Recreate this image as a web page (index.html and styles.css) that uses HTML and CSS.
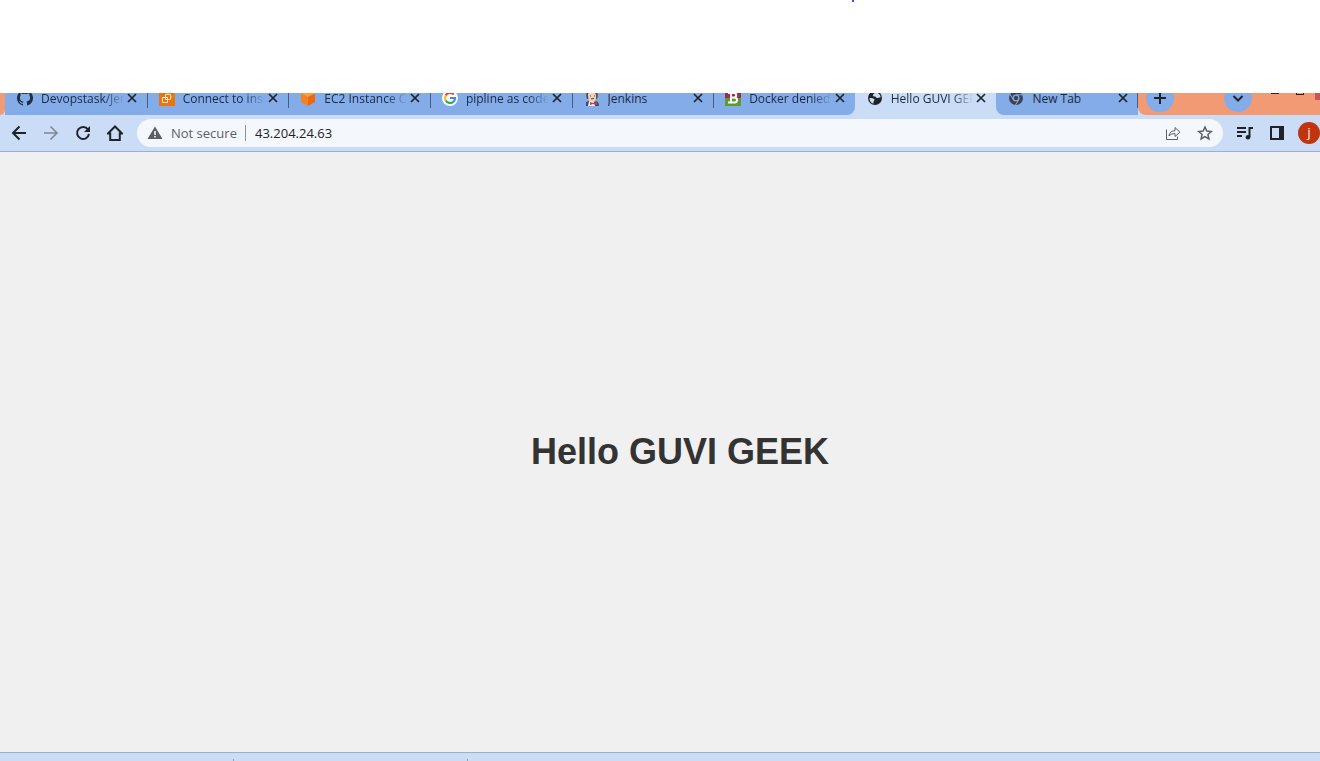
FILE: index.html
```html
<!DOCTYPE html>
<html lang="en">
<head>
<meta charset="utf-8">
<title>Hello GUVI GEEK</title>
<link rel="stylesheet" href="styles.css">
</head>
<body>
<div class="blank"><span class="speck"></span></div>
<header class="browser">
  <div class="strip">
    <div class="strip-edge"></div>
    <nav class="tabs" aria-label="Tabs">
      <div class="tab divided">
        <svg class="icon" viewBox="0 0 16 16"><path fill="#20303f" d="M8 0a8 8 0 0 0-2.5 15.6c.4.1.5-.2.5-.4v-1.500c-2.200.5-2.700-1-2.700-1-.4-.9-.9-1.200-.9-1.200-.7-.5.1-.5.1-.5.8.1 1.200.8 1.200.8.7 1.300 1.900.9 2.300.7.1-.5.3-.9.5-1.100-1.800-.2-3.600-.9-3.600-4 0-.9.3-1.600.8-2.100-.1-.2-.4-1 .1-2.100 0 0 .7-.2 2.200.8a7.500 7.500 0 0 1 4 0c1.500-1 2.200-.8 2.200-.8.4 1.100.2 1.900.1 2.100.5.6.8 1.300.8 2.100 0 3.100-1.900 3.700-3.700 3.900.3.3.6.8.6 1.500v2.400c0 .2.1.5.5.4A8 8 0 0 0 8 0Z"/></svg>
        <a class="title faded" href="#t1">Devopstask/Jen</a>
        <button class="close" aria-label="Close tab"><svg viewBox="0 0 16 16"><path d="m4 4 8 8m0-8-8 8"/></svg></button>
      </div>
      <div class="tab divided">
        <svg class="icon" viewBox="0 0 16 16"><path fill="#e8750e" d="M0 0h16v16H0z"/><g fill="none" stroke="#ffe6cf"><path d="M6.500 4.500h5v5h-5zM3.500 7.500h5v5h-5z"/><path stroke-width=".6" d="M9 2.500v2m4.500 2.500h-2"/></g></svg>
        <a class="title faded" href="#t2">Connect to inst</a>
        <button class="close" aria-label="Close tab"><svg viewBox="0 0 16 16"><path d="m4 4 8 8m0-8-8 8"/></svg></button>
      </div>
      <div class="tab divided">
        <svg class="icon" viewBox="0 0 16 16"><path fill="#ff9a3d" d="m8 0 7 3.500L8 7 1 3.500z"/><path fill="#f58220" d="M1 3.500 8 7v9l-7-4z"/><path fill="#e86a10" d="M15 3.500 8 7v9l7-4z"/></svg>
        <a class="title faded" href="#t3">EC2 Instance C</a>
        <button class="close" aria-label="Close tab"><svg viewBox="0 0 16 16"><path d="m4 4 8 8m0-8-8 8"/></svg></button>
      </div>
      <div class="tab divided">
        <svg class="icon" viewBox="0 0 16 16"><circle cx="8" cy="8" r="8" fill="#fff"/><g fill="none" stroke-width="2.200"><path stroke="#ea4335" d="M3.700 5.500A5 5 0 0 1 11.700 4.600"/><path stroke="#fbbc05" d="M3.700 5.500a5 5 0 0 0 0 5"/><path stroke="#34a853" d="M3.700 10.500a5 5 0 0 0 7.600 1.300"/><path stroke="#4285f4" d="M11.300 11.800A5 5 0 0 0 13 8H8"/></g></svg>
        <a class="title faded" href="#t4">pipline as code</a>
        <button class="close" aria-label="Close tab"><svg viewBox="0 0 16 16"><path d="m4 4 8 8m0-8-8 8"/></svg></button>
      </div>
      <div class="tab divided">
        <svg class="icon" viewBox="0 0 16 16"><path fill="#5b4840" d="M3 9C1 4 3 0 8 0s7 4 5 9z"/><path fill="#f2d3b5" d="M4 4c1-3 7-3 8 1 .5 4-1 7-4 7S4 9 4 4z"/><path fill="#eef2f4" d="M3 16c0-3 2-5 4-5l3 1 2 4z"/><path fill="#34536a" d="M10 12c3-2 5 0 5 4h-4zM2 12l3-1-1 5H2z"/><path fill="#d33833" d="m6 12 3 1 4-1v3l-4-1-3 1z"/><path d="M6 6h1m3 0h1M7 9l3-.5" stroke="#493b32"/></svg>
        <a class="title" href="#t5">Jenkins</a>
        <button class="close" aria-label="Close tab"><svg viewBox="0 0 16 16"><path d="m4 4 8 8m0-8-8 8"/></svg></button>
      </div>
      <div class="tab before-active">
        <svg class="icon" viewBox="0 0 16 16"><path fill="#9e2a4c" d="M0 0h16v8H0z"/><path fill="#5d9b2e" d="M0 8h16v8H0z"/><path fill="none" stroke="#fff" stroke-width="2" d="M3 3h6a2.200 2.200 0 0 1 0 4.500H6h3.500a2.500 2.500 0 0 1 0 5H3M6 3v9"/></svg>
        <a class="title faded" href="#t6">Docker denied</a>
        <button class="close" aria-label="Close tab"><svg viewBox="0 0 16 16"><path d="m4 4 8 8m0-8-8 8"/></svg></button>
      </div>
      <div class="tab active">
        <svg class="icon" viewBox="0 0 16 16"><circle cx="8" cy="8" r="7" fill="#1f2328"/><path fill="#cbdcf6" d="M9 2.500c-2 .2-1.800 1.700-3 2-.5 1.200.4 2 2 2 1 .2.800 1.500 2.200 1.500 1.300 0 1.800-.8 3.300-.5.2-2.500-1.500-4.500-4.500-5zM2.500 8c1.800 0 4.500.2 5 1.500.2 1.200-1 1.200-1 2.200 0 .8.300 1.300-.2 1.800C4 13 2.300 10.500 2.500 8z"/></svg>
        <a class="title faded" href="#t7" aria-current="page">Hello GUVI GEE</a>
        <button class="close" aria-label="Close tab"><svg viewBox="0 0 16 16"><path d="m4 4 8 8m0-8-8 8"/></svg></button>
      </div>
      <div class="tab after-active divided">
        <svg class="icon" viewBox="0 0 16 16"><circle cx="8" cy="8" r="7" fill="#3c4350"/><circle cx="8" cy="8" r="3.500" fill="#84ace9"/><circle cx="8" cy="8" r="2.200" fill="#3c4350"/><path d="M8 4.800h6.500M5.200 9.500 2 4M10.800 9.600 7.500 15" stroke="#84ace9"/></svg>
        <a class="title" href="#t8">New Tab</a>
        <button class="close" aria-label="Close tab"><svg viewBox="0 0 16 16"><path d="m4 4 8 8m0-8-8 8"/></svg></button>
      </div>
    </nav>
    <div class="window-bar">
      <button class="round" aria-label="New tab"><svg viewBox="0 0 16 16"><path d="M8 2v12M2 8h12"/></svg></button>
      <button class="round search" aria-label="Search tabs"><svg viewBox="0 0 16 16"><path d="m3.500 6 4.500 4.500L12.500 6"/></svg></button>
      <button class="win minimize" aria-label="Minimize"></button>
      <button class="win maximize" aria-label="Maximize"></button>
      <button class="shut" aria-label="Close window"></button>
    </div>
  </div>
  <div class="toolbar">
    <button class="tool" aria-label="Back"><svg viewBox="0 0 16 16"><path d="M15 8H2m6.500-6.500L2 8l6.500 6.500"/></svg></button>
    <button class="tool dim" aria-label="Forward" disabled><svg viewBox="0 0 16 16"><path d="M1 8h13M7.500 1.500 14 8l-6.500 6.500"/></svg></button>
    <button class="tool" aria-label="Reload"><svg viewBox="0 0 16 16"><path d="M13 4.500A6 6 0 1 0 14 9"/><path class="solid" d="M15 1v6H9z"/></svg></button>
    <button class="tool" aria-label="Home"><svg viewBox="0 0 16 16"><path d="M1 8.500 8 1.500l7 7h-2.200V15H3.200V8.500z"/></svg></button>
    <form class="omnibox">
      <svg class="warning" viewBox="0 0 16 16"><path fill="#5b5f65" d="M8 1.500 15.500 14H.5z"/><path stroke="#f4f7fc" stroke-width="1.600" d="M8 6v4m0 1v1.600"/></svg>
      <label class="security" for="address">Not secure</label>
      <input class="address" id="address" type="text" value="43.204.24.63">
      <button class="inner" type="button" aria-label="Share"><svg viewBox="0 0 16 16"><path d="M1.500 4.500v10h11v-3M4 11c.4-3.500 2.500-5.200 6-5.300V2.500l5 4.700-5 4.300V8.600C7.400 8.500 5.500 9.300 4 11z"/></svg></button>
      <button class="inner" type="button" aria-label="Bookmark"><svg class="star" viewBox="0 0 16 16"><path d="m8 2 1.800 4.100 4.500.4-3.400 3 1 4.400L8 11.600l-3.900 2.300 1-4.400-3.400-3 4.500-.4z"/></svg></button>
    </form>
    <button class="tool" aria-label="Media controls"><svg viewBox="0 0 16 16"><path d="M0 3h9M0 7h9M0 11h5M12.500 12V3H16"/><circle class="solid" cx="11" cy="12.300" r="2.300"/></svg></button>
    <button class="tool" aria-label="Side panel"><svg viewBox="0 0 16 16"><path d="M2 2h12v12H2z"/><path class="solid" d="M10 2h5v12h-5z"/></svg></button>
    <button class="avatar" aria-label="Profile">j</button>
  </div>
</header>
<main class="page"><h1>Hello GUVI GEEK</h1></main>
<footer class="shelf"><span class="tick"></span><span class="tick"></span></footer>
</body>
</html>
```
FILE: styles.css
```css
* { box-sizing: border-box; }

body {
  margin: 0;
  min-height: 100vh;
  display: flex;
  flex-direction: column;
  overflow-x: hidden;
  background: #fff;
  font: 12px/18px "Open Sans", "Noto Sans", sans-serif;
  color: #1f2328;
}

button {
  margin: 0;
  padding: 0;
  border: 0;
  background: none;
  font: inherit;
  color: inherit;
}

svg { display: block; fill: none; stroke: none; }
.close svg, .round svg, .tool svg, .inner svg {
  width: 16px;
  height: 16px;
  stroke: currentColor;
  stroke-width: 2;
}
.solid { fill: currentColor; stroke: none; }

.blank { height: 93px; padding-left: 852px; }
.speck { display: block; width: 2px; height: 2px; background: #4a4af0; }

.strip {
  display: flex;
  align-items: flex-end;
  height: 22px;
  overflow: hidden;
  background: #cbdcf6;
}
.strip-edge {
  flex: none;
  width: 5px;
  height: 22px;
  background: #f19a74;
  border-bottom-right-radius: 5px;
}
.tabs { display: flex; flex: 1; min-width: 0; }
.tab {
  position: relative;
  display: flex;
  flex: 1;
  align-items: center;
  min-width: 0;
  height: 34px;
  padding: 0 7px 0 12px;
  background: #84ace9;
}
.divided::after {
  content: "";
  position: absolute;
  z-index: 1;
  right: -1px;
  bottom: 7px;
  width: 1px;
  height: 20px;
  background: #465f86;
}
.after-active::after { right: 0; }
.active { background: #cbdcf6; }
.before-active { border-bottom-right-radius: 8px; }
.after-active { border-bottom-left-radius: 8px; }
.icon { flex: none; width: 16px; height: 16px; margin-right: 8px; }
.title {
  flex: 1;
  min-width: 0;
  overflow: hidden;
  padding-top: 2px;
  white-space: nowrap;
  color: #1c2a40;
  text-decoration: none;
}
.faded { mask-image: linear-gradient(to right, #000 75%, transparent); }
.close { flex: none; }
.close svg { stroke-width: 1.7; }

.window-bar {
  display: flex;
  align-items: flex-end;
  flex: none;
  width: 182px;
  height: 22px;
  padding-left: 8px;
  background: #f19a74;
  border-bottom-left-radius: 8px;
}
.round {
  display: grid;
  place-items: center;
  flex: none;
  width: 28px;
  height: 28px;
  margin-bottom: 3px;
  border-radius: 50%;
  background: #84ace9;
}
.search { margin-left: 50px; }
.win { flex: none; align-self: flex-start; }
.minimize { width: 8px; height: 1px; margin-left: 19px; background: #2b2420; }
.maximize { width: 8px; height: 2px; margin-left: 17px; border: solid #2b2420; border-width: 0 1px 1px; }
.shut { flex: none; align-self: flex-start; width: 5px; height: 7px; margin-left: auto; background: #cb5558; }

.toolbar {
  display: flex;
  align-items: center;
  height: 37px;
  padding-left: 3px;
  border-bottom: 1px solid #9dafcf;
  background: #cbdcf6;
}
.tool {
  display: grid;
  place-items: center;
  flex: none;
  width: 32px;
  height: 32px;
}
.dim { color: #7e8899; }
.dim svg { stroke-width: 1.6; }
.omnibox {
  display: flex;
  align-items: center;
  flex: 1;
  min-width: 0;
  height: 28px;
  margin: 0 6px;
  padding: 0 2px 0 10px;
  border-radius: 14px;
  background: #f4f7fc;
  font-size: 13px;
}
.warning { flex: none; width: 16px; height: 16px; margin-right: 8px; }
.security {
  flex: none;
  width: 75px;
  height: 16px;
  line-height: 16px;
  border-right: 1px solid #8d9299;
  color: #5b5f65;
  white-space: nowrap;
}
.address {
  flex: 1;
  min-width: 0;
  height: 24px;
  padding: 0 0 0 9px;
  border: 0;
  outline: 0;
  background: none;
  font: inherit;
  color: inherit;
}
.inner {
  display: grid;
  place-items: center;
  flex: none;
  width: 32px;
  height: 28px;
  color: #5b5f65;
}
.inner svg { stroke-width: 1; }
.inner .star { stroke-width: 1.5; }
.avatar {
  flex: none;
  width: 22px;
  height: 22px;
  margin-left: 5px;
  border-radius: 50%;
  background: #c0350d;
  color: #fff;
  line-height: 20px;
}

.page {
  display: grid;
  flex: 1;
  place-items: center;
  padding-left: 40px;
  background: #f0f0f0;
}
h1 {
  margin: 0;
  font: bold 36px/42px "Liberation Sans", Arial, sans-serif;
  color: #333;
}

.shelf {
  display: flex;
  align-items: flex-end;
  height: 9px;
  border-top: 1px solid #9dafcf;
  background: #cbdcf6;
}
.tick { width: 1px; height: 2px; margin-left: 233px; background: #8ea1c2; }
```
